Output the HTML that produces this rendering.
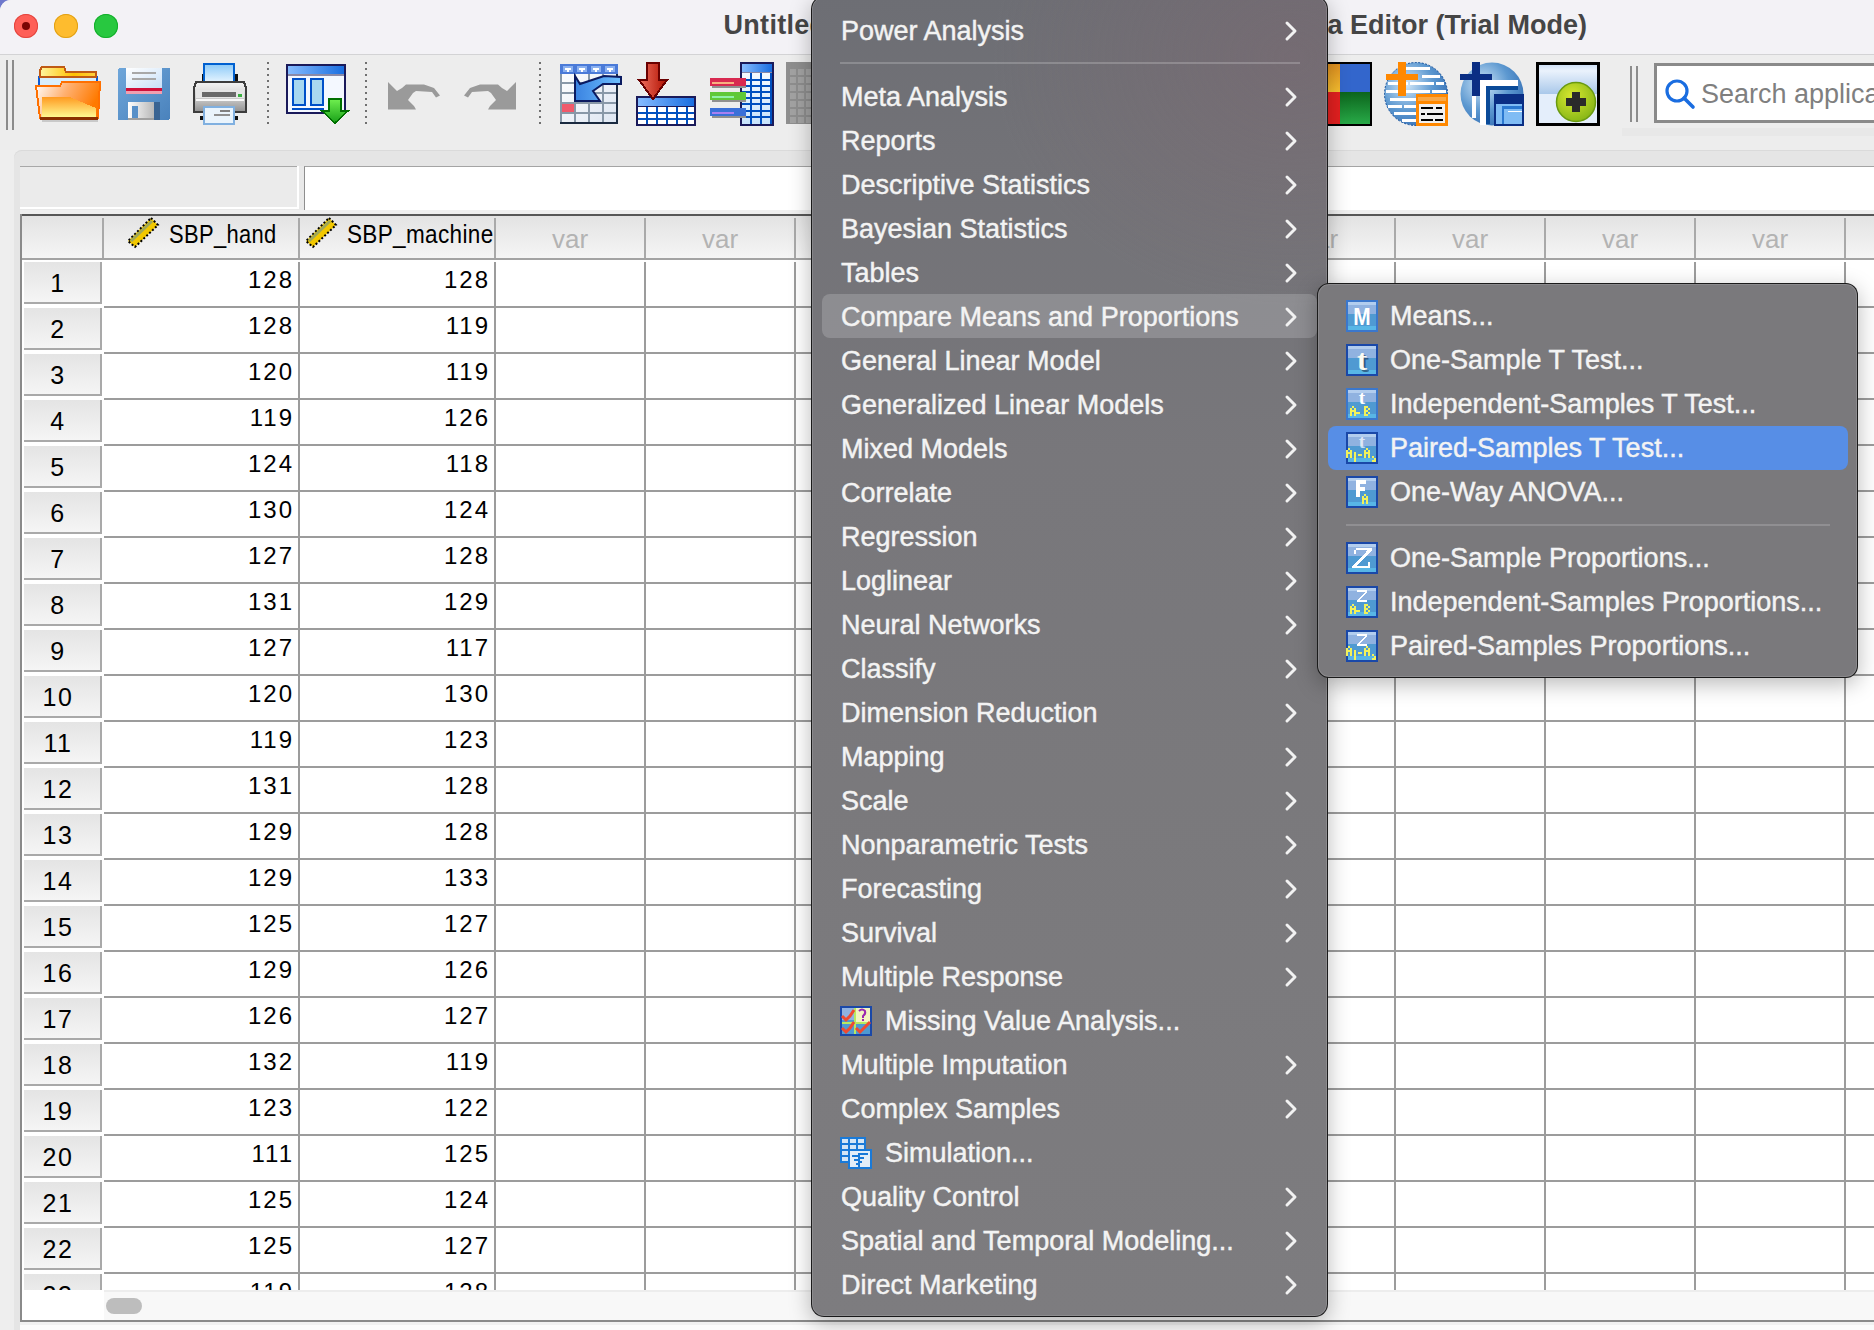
<!DOCTYPE html>
<html><head><meta charset="utf-8"><title>SPSS</title><style>
html,body{margin:0;padding:0;}
body{width:1874px;height:1330px;overflow:hidden;position:relative;background:#6e78cc;font-family:"Liberation Sans",sans-serif;}
.a{position:absolute;}
.t{position:absolute;white-space:nowrap;}
.m{-webkit-text-stroke:0.45px #f3f3f3;}
svg{position:absolute;overflow:visible;}
</style></head><body>
<div class="a" style="left:0px;top:0px;width:1874px;height:1330px;background:#eeeeee;border-top-left-radius:11px;overflow:hidden;"></div>
<div class="a" style="left:0px;top:0px;width:1874px;height:54px;background:#f3f2f6;border-top-left-radius:11px;"></div>
<div class="a" style="left:0px;top:54px;width:1874px;height:1px;background:#d3d3d5;"></div>
<div class="a" style="left:14px;top:14px;width:24px;height:24px;background:#fe5f57;border-radius:50%;box-shadow:inset 0 0 0 1px #e2463f;"></div>
<div class="a" style="left:54px;top:14px;width:24px;height:24px;background:#febc2e;border-radius:50%;box-shadow:inset 0 0 0 1px #e1a116;"></div>
<div class="a" style="left:94px;top:14px;width:24px;height:24px;background:#28c840;border-radius:50%;box-shadow:inset 0 0 0 1px #14ae2c;"></div>
<div class="a" style="left:22px;top:22px;width:8px;height:8px;background:#7a0504;border-radius:50%;"></div>
<div class="t" style="left:723.5px;top:7.64px;font-size:27px;line-height:34px;color:#454545;font-weight:bold;letter-spacing:0.3px;">Untitled1 [DataSet0]</div>
<div class="t" style="left:1287px;width:300px;text-align:right;top:7.64px;font-size:27px;line-height:34px;color:#454545;font-weight:bold;">a Editor (Trial Mode)</div>
<div class="a" style="left:0px;top:55px;width:1874px;height:95px;background:#ededed;"></div>
<div class="a" style="left:1622px;top:128px;width:252px;height:8px;background:#e8e8e8;"></div>
<div class="a" style="left:14px;top:150px;width:1874px;height:1200px;background:#e5e5e5;border-top-left-radius:8px;box-shadow:inset 0 1px 0 #dadada;"></div>
<div class="a" style="left:20px;top:166px;width:1854px;height:48px;background:#e9e9e9;"></div>
<div class="a" style="left:20px;top:166px;width:279px;height:43px;background:#ffffff;"></div>
<div class="a" style="left:20px;top:166px;width:277px;height:41px;background:#ebebeb;border-top:1px solid #a8a8a8;box-sizing:border-box;"></div>
<div class="a" style="left:304px;top:166px;width:1570px;height:44px;background:#ffffff;border-left:1px solid #8e8e8e;border-top:1px solid #a4a4a4;box-sizing:border-box;"></div>
<div class="a" style="left:20px;top:210px;width:1854px;height:4px;background:#efefef;"></div>
<div class="a" style="left:20px;top:214px;width:1854px;height:1108px;background:#ffffff;"></div>
<div class="a" style="left:20px;top:214px;width:1854px;height:2px;background:#575757;"></div>
<div class="a" style="left:20px;top:214px;width:2px;height:1108px;background:#8a8a8a;"></div>
<div class="a" style="left:22px;top:216px;width:1852px;height:42px;background:linear-gradient(#e3e3e3,#f5f5f5);"></div>
<div class="a" style="left:22px;top:258px;width:1852px;height:2px;background:#a3a3a3;"></div>
<div class="a" style="left:102px;top:218px;width:2px;height:40px;background:#a9a9a9;"></div>
<div class="a" style="left:298px;top:218px;width:2px;height:40px;background:#a9a9a9;"></div>
<div class="a" style="left:494px;top:218px;width:2px;height:40px;background:#a9a9a9;"></div>
<div class="a" style="left:644px;top:218px;width:2px;height:40px;background:#a9a9a9;"></div>
<div class="a" style="left:794px;top:218px;width:2px;height:40px;background:#a9a9a9;"></div>
<div class="a" style="left:944px;top:218px;width:2px;height:40px;background:#a9a9a9;"></div>
<div class="a" style="left:1094px;top:218px;width:2px;height:40px;background:#a9a9a9;"></div>
<div class="a" style="left:1244px;top:218px;width:2px;height:40px;background:#a9a9a9;"></div>
<div class="a" style="left:1394px;top:218px;width:2px;height:40px;background:#a9a9a9;"></div>
<div class="a" style="left:1544px;top:218px;width:2px;height:40px;background:#a9a9a9;"></div>
<div class="a" style="left:1694px;top:218px;width:2px;height:40px;background:#a9a9a9;"></div>
<div class="a" style="left:1844px;top:218px;width:2px;height:40px;background:#a9a9a9;"></div>
<div class="a" style="left:0;top:0;width:1874px;height:1290px;overflow:hidden;">
<div class="a" style="left:24px;top:262px;width:76px;height:40px;background:linear-gradient(#e4e4e4,#f5f5f5);border-right:2px solid #a9a9a9;border-bottom:2px solid #a9a9a9;"></div>
<div class="t" style="left:23.0px;width:70px;text-align:center;top:267.84px;font-size:25px;line-height:31px;color:#000;font-weight:normal;letter-spacing:1.5px;">1</div>
<div class="t" style="left:194px;width:100px;text-align:right;top:264.68px;font-size:24px;line-height:30px;color:#000;font-weight:normal;letter-spacing:2px;">128</div>
<div class="t" style="left:390px;width:100px;text-align:right;top:264.68px;font-size:24px;line-height:30px;color:#000;font-weight:normal;letter-spacing:2px;">128</div>
<div class="a" style="left:24px;top:308px;width:76px;height:40px;background:linear-gradient(#e4e4e4,#f5f5f5);border-right:2px solid #a9a9a9;border-bottom:2px solid #a9a9a9;"></div>
<div class="t" style="left:23.0px;width:70px;text-align:center;top:313.84px;font-size:25px;line-height:31px;color:#000;font-weight:normal;letter-spacing:1.5px;">2</div>
<div class="t" style="left:194px;width:100px;text-align:right;top:310.68px;font-size:24px;line-height:30px;color:#000;font-weight:normal;letter-spacing:2px;">128</div>
<div class="t" style="left:390px;width:100px;text-align:right;top:310.68px;font-size:24px;line-height:30px;color:#000;font-weight:normal;letter-spacing:2px;">119</div>
<div class="a" style="left:24px;top:354px;width:76px;height:40px;background:linear-gradient(#e4e4e4,#f5f5f5);border-right:2px solid #a9a9a9;border-bottom:2px solid #a9a9a9;"></div>
<div class="t" style="left:23.0px;width:70px;text-align:center;top:359.84px;font-size:25px;line-height:31px;color:#000;font-weight:normal;letter-spacing:1.5px;">3</div>
<div class="t" style="left:194px;width:100px;text-align:right;top:356.68px;font-size:24px;line-height:30px;color:#000;font-weight:normal;letter-spacing:2px;">120</div>
<div class="t" style="left:390px;width:100px;text-align:right;top:356.68px;font-size:24px;line-height:30px;color:#000;font-weight:normal;letter-spacing:2px;">119</div>
<div class="a" style="left:24px;top:400px;width:76px;height:40px;background:linear-gradient(#e4e4e4,#f5f5f5);border-right:2px solid #a9a9a9;border-bottom:2px solid #a9a9a9;"></div>
<div class="t" style="left:23.0px;width:70px;text-align:center;top:405.84px;font-size:25px;line-height:31px;color:#000;font-weight:normal;letter-spacing:1.5px;">4</div>
<div class="t" style="left:194px;width:100px;text-align:right;top:402.68px;font-size:24px;line-height:30px;color:#000;font-weight:normal;letter-spacing:2px;">119</div>
<div class="t" style="left:390px;width:100px;text-align:right;top:402.68px;font-size:24px;line-height:30px;color:#000;font-weight:normal;letter-spacing:2px;">126</div>
<div class="a" style="left:24px;top:446px;width:76px;height:40px;background:linear-gradient(#e4e4e4,#f5f5f5);border-right:2px solid #a9a9a9;border-bottom:2px solid #a9a9a9;"></div>
<div class="t" style="left:23.0px;width:70px;text-align:center;top:451.84px;font-size:25px;line-height:31px;color:#000;font-weight:normal;letter-spacing:1.5px;">5</div>
<div class="t" style="left:194px;width:100px;text-align:right;top:448.68px;font-size:24px;line-height:30px;color:#000;font-weight:normal;letter-spacing:2px;">124</div>
<div class="t" style="left:390px;width:100px;text-align:right;top:448.68px;font-size:24px;line-height:30px;color:#000;font-weight:normal;letter-spacing:2px;">118</div>
<div class="a" style="left:24px;top:492px;width:76px;height:40px;background:linear-gradient(#e4e4e4,#f5f5f5);border-right:2px solid #a9a9a9;border-bottom:2px solid #a9a9a9;"></div>
<div class="t" style="left:23.0px;width:70px;text-align:center;top:497.84px;font-size:25px;line-height:31px;color:#000;font-weight:normal;letter-spacing:1.5px;">6</div>
<div class="t" style="left:194px;width:100px;text-align:right;top:494.68px;font-size:24px;line-height:30px;color:#000;font-weight:normal;letter-spacing:2px;">130</div>
<div class="t" style="left:390px;width:100px;text-align:right;top:494.68px;font-size:24px;line-height:30px;color:#000;font-weight:normal;letter-spacing:2px;">124</div>
<div class="a" style="left:24px;top:538px;width:76px;height:40px;background:linear-gradient(#e4e4e4,#f5f5f5);border-right:2px solid #a9a9a9;border-bottom:2px solid #a9a9a9;"></div>
<div class="t" style="left:23.0px;width:70px;text-align:center;top:543.84px;font-size:25px;line-height:31px;color:#000;font-weight:normal;letter-spacing:1.5px;">7</div>
<div class="t" style="left:194px;width:100px;text-align:right;top:540.68px;font-size:24px;line-height:30px;color:#000;font-weight:normal;letter-spacing:2px;">127</div>
<div class="t" style="left:390px;width:100px;text-align:right;top:540.68px;font-size:24px;line-height:30px;color:#000;font-weight:normal;letter-spacing:2px;">128</div>
<div class="a" style="left:24px;top:584px;width:76px;height:40px;background:linear-gradient(#e4e4e4,#f5f5f5);border-right:2px solid #a9a9a9;border-bottom:2px solid #a9a9a9;"></div>
<div class="t" style="left:23.0px;width:70px;text-align:center;top:589.84px;font-size:25px;line-height:31px;color:#000;font-weight:normal;letter-spacing:1.5px;">8</div>
<div class="t" style="left:194px;width:100px;text-align:right;top:586.68px;font-size:24px;line-height:30px;color:#000;font-weight:normal;letter-spacing:2px;">131</div>
<div class="t" style="left:390px;width:100px;text-align:right;top:586.68px;font-size:24px;line-height:30px;color:#000;font-weight:normal;letter-spacing:2px;">129</div>
<div class="a" style="left:24px;top:630px;width:76px;height:40px;background:linear-gradient(#e4e4e4,#f5f5f5);border-right:2px solid #a9a9a9;border-bottom:2px solid #a9a9a9;"></div>
<div class="t" style="left:23.0px;width:70px;text-align:center;top:635.84px;font-size:25px;line-height:31px;color:#000;font-weight:normal;letter-spacing:1.5px;">9</div>
<div class="t" style="left:194px;width:100px;text-align:right;top:632.68px;font-size:24px;line-height:30px;color:#000;font-weight:normal;letter-spacing:2px;">127</div>
<div class="t" style="left:390px;width:100px;text-align:right;top:632.68px;font-size:24px;line-height:30px;color:#000;font-weight:normal;letter-spacing:2px;">117</div>
<div class="a" style="left:24px;top:676px;width:76px;height:40px;background:linear-gradient(#e4e4e4,#f5f5f5);border-right:2px solid #a9a9a9;border-bottom:2px solid #a9a9a9;"></div>
<div class="t" style="left:23.0px;width:70px;text-align:center;top:681.84px;font-size:25px;line-height:31px;color:#000;font-weight:normal;letter-spacing:1.5px;">10</div>
<div class="t" style="left:194px;width:100px;text-align:right;top:678.68px;font-size:24px;line-height:30px;color:#000;font-weight:normal;letter-spacing:2px;">120</div>
<div class="t" style="left:390px;width:100px;text-align:right;top:678.68px;font-size:24px;line-height:30px;color:#000;font-weight:normal;letter-spacing:2px;">130</div>
<div class="a" style="left:24px;top:722px;width:76px;height:40px;background:linear-gradient(#e4e4e4,#f5f5f5);border-right:2px solid #a9a9a9;border-bottom:2px solid #a9a9a9;"></div>
<div class="t" style="left:23.0px;width:70px;text-align:center;top:727.84px;font-size:25px;line-height:31px;color:#000;font-weight:normal;letter-spacing:1.5px;">11</div>
<div class="t" style="left:194px;width:100px;text-align:right;top:724.68px;font-size:24px;line-height:30px;color:#000;font-weight:normal;letter-spacing:2px;">119</div>
<div class="t" style="left:390px;width:100px;text-align:right;top:724.68px;font-size:24px;line-height:30px;color:#000;font-weight:normal;letter-spacing:2px;">123</div>
<div class="a" style="left:24px;top:768px;width:76px;height:40px;background:linear-gradient(#e4e4e4,#f5f5f5);border-right:2px solid #a9a9a9;border-bottom:2px solid #a9a9a9;"></div>
<div class="t" style="left:23.0px;width:70px;text-align:center;top:773.84px;font-size:25px;line-height:31px;color:#000;font-weight:normal;letter-spacing:1.5px;">12</div>
<div class="t" style="left:194px;width:100px;text-align:right;top:770.68px;font-size:24px;line-height:30px;color:#000;font-weight:normal;letter-spacing:2px;">131</div>
<div class="t" style="left:390px;width:100px;text-align:right;top:770.68px;font-size:24px;line-height:30px;color:#000;font-weight:normal;letter-spacing:2px;">128</div>
<div class="a" style="left:24px;top:814px;width:76px;height:40px;background:linear-gradient(#e4e4e4,#f5f5f5);border-right:2px solid #a9a9a9;border-bottom:2px solid #a9a9a9;"></div>
<div class="t" style="left:23.0px;width:70px;text-align:center;top:819.84px;font-size:25px;line-height:31px;color:#000;font-weight:normal;letter-spacing:1.5px;">13</div>
<div class="t" style="left:194px;width:100px;text-align:right;top:816.68px;font-size:24px;line-height:30px;color:#000;font-weight:normal;letter-spacing:2px;">129</div>
<div class="t" style="left:390px;width:100px;text-align:right;top:816.68px;font-size:24px;line-height:30px;color:#000;font-weight:normal;letter-spacing:2px;">128</div>
<div class="a" style="left:24px;top:860px;width:76px;height:40px;background:linear-gradient(#e4e4e4,#f5f5f5);border-right:2px solid #a9a9a9;border-bottom:2px solid #a9a9a9;"></div>
<div class="t" style="left:23.0px;width:70px;text-align:center;top:865.84px;font-size:25px;line-height:31px;color:#000;font-weight:normal;letter-spacing:1.5px;">14</div>
<div class="t" style="left:194px;width:100px;text-align:right;top:862.68px;font-size:24px;line-height:30px;color:#000;font-weight:normal;letter-spacing:2px;">129</div>
<div class="t" style="left:390px;width:100px;text-align:right;top:862.68px;font-size:24px;line-height:30px;color:#000;font-weight:normal;letter-spacing:2px;">133</div>
<div class="a" style="left:24px;top:906px;width:76px;height:40px;background:linear-gradient(#e4e4e4,#f5f5f5);border-right:2px solid #a9a9a9;border-bottom:2px solid #a9a9a9;"></div>
<div class="t" style="left:23.0px;width:70px;text-align:center;top:911.84px;font-size:25px;line-height:31px;color:#000;font-weight:normal;letter-spacing:1.5px;">15</div>
<div class="t" style="left:194px;width:100px;text-align:right;top:908.68px;font-size:24px;line-height:30px;color:#000;font-weight:normal;letter-spacing:2px;">125</div>
<div class="t" style="left:390px;width:100px;text-align:right;top:908.68px;font-size:24px;line-height:30px;color:#000;font-weight:normal;letter-spacing:2px;">127</div>
<div class="a" style="left:24px;top:952px;width:76px;height:40px;background:linear-gradient(#e4e4e4,#f5f5f5);border-right:2px solid #a9a9a9;border-bottom:2px solid #a9a9a9;"></div>
<div class="t" style="left:23.0px;width:70px;text-align:center;top:957.84px;font-size:25px;line-height:31px;color:#000;font-weight:normal;letter-spacing:1.5px;">16</div>
<div class="t" style="left:194px;width:100px;text-align:right;top:954.68px;font-size:24px;line-height:30px;color:#000;font-weight:normal;letter-spacing:2px;">129</div>
<div class="t" style="left:390px;width:100px;text-align:right;top:954.68px;font-size:24px;line-height:30px;color:#000;font-weight:normal;letter-spacing:2px;">126</div>
<div class="a" style="left:24px;top:998px;width:76px;height:40px;background:linear-gradient(#e4e4e4,#f5f5f5);border-right:2px solid #a9a9a9;border-bottom:2px solid #a9a9a9;"></div>
<div class="t" style="left:23.0px;width:70px;text-align:center;top:1003.84px;font-size:25px;line-height:31px;color:#000;font-weight:normal;letter-spacing:1.5px;">17</div>
<div class="t" style="left:194px;width:100px;text-align:right;top:1000.68px;font-size:24px;line-height:30px;color:#000;font-weight:normal;letter-spacing:2px;">126</div>
<div class="t" style="left:390px;width:100px;text-align:right;top:1000.68px;font-size:24px;line-height:30px;color:#000;font-weight:normal;letter-spacing:2px;">127</div>
<div class="a" style="left:24px;top:1044px;width:76px;height:40px;background:linear-gradient(#e4e4e4,#f5f5f5);border-right:2px solid #a9a9a9;border-bottom:2px solid #a9a9a9;"></div>
<div class="t" style="left:23.0px;width:70px;text-align:center;top:1049.84px;font-size:25px;line-height:31px;color:#000;font-weight:normal;letter-spacing:1.5px;">18</div>
<div class="t" style="left:194px;width:100px;text-align:right;top:1046.68px;font-size:24px;line-height:30px;color:#000;font-weight:normal;letter-spacing:2px;">132</div>
<div class="t" style="left:390px;width:100px;text-align:right;top:1046.68px;font-size:24px;line-height:30px;color:#000;font-weight:normal;letter-spacing:2px;">119</div>
<div class="a" style="left:24px;top:1090px;width:76px;height:40px;background:linear-gradient(#e4e4e4,#f5f5f5);border-right:2px solid #a9a9a9;border-bottom:2px solid #a9a9a9;"></div>
<div class="t" style="left:23.0px;width:70px;text-align:center;top:1095.84px;font-size:25px;line-height:31px;color:#000;font-weight:normal;letter-spacing:1.5px;">19</div>
<div class="t" style="left:194px;width:100px;text-align:right;top:1092.68px;font-size:24px;line-height:30px;color:#000;font-weight:normal;letter-spacing:2px;">123</div>
<div class="t" style="left:390px;width:100px;text-align:right;top:1092.68px;font-size:24px;line-height:30px;color:#000;font-weight:normal;letter-spacing:2px;">122</div>
<div class="a" style="left:24px;top:1136px;width:76px;height:40px;background:linear-gradient(#e4e4e4,#f5f5f5);border-right:2px solid #a9a9a9;border-bottom:2px solid #a9a9a9;"></div>
<div class="t" style="left:23.0px;width:70px;text-align:center;top:1141.84px;font-size:25px;line-height:31px;color:#000;font-weight:normal;letter-spacing:1.5px;">20</div>
<div class="t" style="left:194px;width:100px;text-align:right;top:1138.68px;font-size:24px;line-height:30px;color:#000;font-weight:normal;letter-spacing:2px;">111</div>
<div class="t" style="left:390px;width:100px;text-align:right;top:1138.68px;font-size:24px;line-height:30px;color:#000;font-weight:normal;letter-spacing:2px;">125</div>
<div class="a" style="left:24px;top:1182px;width:76px;height:40px;background:linear-gradient(#e4e4e4,#f5f5f5);border-right:2px solid #a9a9a9;border-bottom:2px solid #a9a9a9;"></div>
<div class="t" style="left:23.0px;width:70px;text-align:center;top:1187.84px;font-size:25px;line-height:31px;color:#000;font-weight:normal;letter-spacing:1.5px;">21</div>
<div class="t" style="left:194px;width:100px;text-align:right;top:1184.68px;font-size:24px;line-height:30px;color:#000;font-weight:normal;letter-spacing:2px;">125</div>
<div class="t" style="left:390px;width:100px;text-align:right;top:1184.68px;font-size:24px;line-height:30px;color:#000;font-weight:normal;letter-spacing:2px;">124</div>
<div class="a" style="left:24px;top:1228px;width:76px;height:40px;background:linear-gradient(#e4e4e4,#f5f5f5);border-right:2px solid #a9a9a9;border-bottom:2px solid #a9a9a9;"></div>
<div class="t" style="left:23.0px;width:70px;text-align:center;top:1233.84px;font-size:25px;line-height:31px;color:#000;font-weight:normal;letter-spacing:1.5px;">22</div>
<div class="t" style="left:194px;width:100px;text-align:right;top:1230.68px;font-size:24px;line-height:30px;color:#000;font-weight:normal;letter-spacing:2px;">125</div>
<div class="t" style="left:390px;width:100px;text-align:right;top:1230.68px;font-size:24px;line-height:30px;color:#000;font-weight:normal;letter-spacing:2px;">127</div>
<div class="a" style="left:24px;top:1274px;width:76px;height:40px;background:linear-gradient(#e4e4e4,#f5f5f5);border-right:2px solid #a9a9a9;border-bottom:2px solid #a9a9a9;"></div>
<div class="t" style="left:23.0px;width:70px;text-align:center;top:1279.84px;font-size:25px;line-height:31px;color:#000;font-weight:normal;letter-spacing:1.5px;">23</div>
<div class="t" style="left:194px;width:100px;text-align:right;top:1276.68px;font-size:24px;line-height:30px;color:#000;font-weight:normal;letter-spacing:2px;">119</div>
<div class="t" style="left:390px;width:100px;text-align:right;top:1276.68px;font-size:24px;line-height:30px;color:#000;font-weight:normal;letter-spacing:2px;">128</div>
<div class="a" style="left:104px;top:306px;width:1770px;height:2px;background:#9c9c9c;"></div>
<div class="a" style="left:104px;top:352px;width:1770px;height:2px;background:#9c9c9c;"></div>
<div class="a" style="left:104px;top:398px;width:1770px;height:2px;background:#9c9c9c;"></div>
<div class="a" style="left:104px;top:444px;width:1770px;height:2px;background:#9c9c9c;"></div>
<div class="a" style="left:104px;top:490px;width:1770px;height:2px;background:#9c9c9c;"></div>
<div class="a" style="left:104px;top:536px;width:1770px;height:2px;background:#9c9c9c;"></div>
<div class="a" style="left:104px;top:582px;width:1770px;height:2px;background:#9c9c9c;"></div>
<div class="a" style="left:104px;top:628px;width:1770px;height:2px;background:#9c9c9c;"></div>
<div class="a" style="left:104px;top:674px;width:1770px;height:2px;background:#9c9c9c;"></div>
<div class="a" style="left:104px;top:720px;width:1770px;height:2px;background:#9c9c9c;"></div>
<div class="a" style="left:104px;top:766px;width:1770px;height:2px;background:#9c9c9c;"></div>
<div class="a" style="left:104px;top:812px;width:1770px;height:2px;background:#9c9c9c;"></div>
<div class="a" style="left:104px;top:858px;width:1770px;height:2px;background:#9c9c9c;"></div>
<div class="a" style="left:104px;top:904px;width:1770px;height:2px;background:#9c9c9c;"></div>
<div class="a" style="left:104px;top:950px;width:1770px;height:2px;background:#9c9c9c;"></div>
<div class="a" style="left:104px;top:996px;width:1770px;height:2px;background:#9c9c9c;"></div>
<div class="a" style="left:104px;top:1042px;width:1770px;height:2px;background:#9c9c9c;"></div>
<div class="a" style="left:104px;top:1088px;width:1770px;height:2px;background:#9c9c9c;"></div>
<div class="a" style="left:104px;top:1134px;width:1770px;height:2px;background:#9c9c9c;"></div>
<div class="a" style="left:104px;top:1180px;width:1770px;height:2px;background:#9c9c9c;"></div>
<div class="a" style="left:104px;top:1226px;width:1770px;height:2px;background:#9c9c9c;"></div>
<div class="a" style="left:104px;top:1272px;width:1770px;height:2px;background:#9c9c9c;"></div>
<div class="a" style="left:298px;top:262px;width:2px;height:1028px;background:#9c9c9c;"></div>
<div class="a" style="left:494px;top:262px;width:2px;height:1028px;background:#9c9c9c;"></div>
<div class="a" style="left:644px;top:262px;width:2px;height:1028px;background:#9c9c9c;"></div>
<div class="a" style="left:794px;top:262px;width:2px;height:1028px;background:#9c9c9c;"></div>
<div class="a" style="left:944px;top:262px;width:2px;height:1028px;background:#9c9c9c;"></div>
<div class="a" style="left:1094px;top:262px;width:2px;height:1028px;background:#9c9c9c;"></div>
<div class="a" style="left:1244px;top:262px;width:2px;height:1028px;background:#9c9c9c;"></div>
<div class="a" style="left:1394px;top:262px;width:2px;height:1028px;background:#9c9c9c;"></div>
<div class="a" style="left:1544px;top:262px;width:2px;height:1028px;background:#9c9c9c;"></div>
<div class="a" style="left:1694px;top:262px;width:2px;height:1028px;background:#9c9c9c;"></div>
<div class="a" style="left:1844px;top:262px;width:2px;height:1028px;background:#9c9c9c;"></div>
</div>
<svg style="left:124px;top:214px" width="40" height="38" viewBox="0 0 40 38"><polygon points="27,4 34,11 11,33 4,27" fill="#f2c800" stroke="#000" stroke-width="2" stroke-dasharray="2 2"/><path d="M7 27 L28 7" stroke="#a0a858" stroke-width="3"/></svg>
<svg style="left:302px;top:214px" width="40" height="38" viewBox="0 0 40 38"><polygon points="27,4 34,11 11,33 4,27" fill="#f2c800" stroke="#000" stroke-width="2" stroke-dasharray="2 2"/><path d="M7 27 L28 7" stroke="#a0a858" stroke-width="3"/></svg>
<div class="t" style="left:168.5px;top:219.44px;font-size:25px;line-height:31px;color:#000;font-weight:normal;letter-spacing:0.4px;transform:scaleX(0.877);transform-origin:0 0;">SBP_hand</div>
<div class="t" style="left:346.5px;top:219.44px;font-size:25px;line-height:31px;color:#000;font-weight:normal;letter-spacing:0.4px;transform:scaleX(0.9);transform-origin:0 0;">SBP_machine</div>
<div class="t" style="left:500.0px;width:140px;text-align:center;top:222.79px;font-size:26px;line-height:32px;color:#b3b3b3;font-weight:normal;">var</div>
<div class="t" style="left:650.0px;width:140px;text-align:center;top:222.79px;font-size:26px;line-height:32px;color:#b3b3b3;font-weight:normal;">var</div>
<div class="t" style="left:800.0px;width:140px;text-align:center;top:222.79px;font-size:26px;line-height:32px;color:#b3b3b3;font-weight:normal;">var</div>
<div class="t" style="left:950.0px;width:140px;text-align:center;top:222.79px;font-size:26px;line-height:32px;color:#b3b3b3;font-weight:normal;">var</div>
<div class="t" style="left:1100.0px;width:140px;text-align:center;top:222.79px;font-size:26px;line-height:32px;color:#b3b3b3;font-weight:normal;">var</div>
<div class="t" style="left:1250.0px;width:140px;text-align:center;top:222.79px;font-size:26px;line-height:32px;color:#b3b3b3;font-weight:normal;">var</div>
<div class="t" style="left:1400.0px;width:140px;text-align:center;top:222.79px;font-size:26px;line-height:32px;color:#b3b3b3;font-weight:normal;">var</div>
<div class="t" style="left:1550.0px;width:140px;text-align:center;top:222.79px;font-size:26px;line-height:32px;color:#b3b3b3;font-weight:normal;">var</div>
<div class="t" style="left:1700.0px;width:140px;text-align:center;top:222.79px;font-size:26px;line-height:32px;color:#b3b3b3;font-weight:normal;">var</div>
<div class="a" style="left:22px;top:1290px;width:82px;height:30px;background:#ffffff;"></div>
<div class="a" style="left:104px;top:1290px;width:1770px;height:30px;background:#f8f8f8;border-top:2px solid #ededed;box-sizing:border-box;"></div>
<div class="a" style="left:106px;top:1298px;width:36px;height:16px;background:#bdbdbd;border-radius:8px;"></div>
<div class="a" style="left:20px;top:1320px;width:1854px;height:2px;background:#8a8a8a;"></div>
<div class="a" style="left:20px;top:1322px;width:1854px;height:3px;background:#f1f1f1;"></div>
<div class="a" style="left:20px;top:1325px;width:1854px;height:5px;background:#fbfbfb;"></div>
<svg style="left:0;top:0" width="1874" height="140" viewBox="0 0 1874 140" shape-rendering="crispEdges"><defs>
<linearGradient id="gBlueTitle" x1="0" y1="0" x2="1" y2="0"><stop offset="0" stop-color="#86bcff"/><stop offset="1" stop-color="#1a6ee0"/></linearGradient>
<linearGradient id="gFolderFront" x1="0" y1="0" x2="1" y2="0.3"><stop offset="0" stop-color="#ffffff"/><stop offset="0.5" stop-color="#ffb070"/><stop offset="1" stop-color="#ff7a00"/></linearGradient>
<linearGradient id="gFolderIn" x1="0" y1="0" x2="0" y2="1"><stop offset="0" stop-color="#ff9a20"/><stop offset="1" stop-color="#fff890"/></linearGradient>
<linearGradient id="gTab" x1="0" y1="0" x2="1" y2="0"><stop offset="0" stop-color="#fff6a0"/><stop offset="0.6" stop-color="#ffc000"/><stop offset="1" stop-color="#ffd040"/></linearGradient>
<linearGradient id="gFloppy" x1="0" y1="0" x2="1" y2="1"><stop offset="0" stop-color="#6ea6da"/><stop offset="1" stop-color="#4a82bc"/></linearGradient>
<linearGradient id="gLabel" x1="0" y1="0" x2="1" y2="1"><stop offset="0" stop-color="#ffffff"/><stop offset="1" stop-color="#c8e0f8"/></linearGradient>
<linearGradient id="gShutter" x1="0" y1="0" x2="1" y2="0"><stop offset="0" stop-color="#ffffff"/><stop offset="1" stop-color="#b8b8b8"/></linearGradient>
<linearGradient id="gPrinter" x1="0" y1="0" x2="0" y2="1"><stop offset="0" stop-color="#f4f4f4"/><stop offset="0.5" stop-color="#d0d0d0"/><stop offset="1" stop-color="#909090"/></linearGradient>
<linearGradient id="gPaper" x1="0" y1="0" x2="0" y2="1"><stop offset="0" stop-color="#8ccaf8"/><stop offset="1" stop-color="#eef8ff"/></linearGradient>
<linearGradient id="gCell" x1="0" y1="0" x2="1" y2="1"><stop offset="0" stop-color="#ffffff"/><stop offset="1" stop-color="#dde6f2"/></linearGradient>
<linearGradient id="gArrowB" x1="0" y1="0" x2="1" y2="0"><stop offset="0" stop-color="#3a82e0"/><stop offset="1" stop-color="#6ec0ff"/></linearGradient>
<linearGradient id="gRed" x1="0" y1="0" x2="1" y2="0"><stop offset="0" stop-color="#f07060"/><stop offset="1" stop-color="#b01000"/></linearGradient>
<linearGradient id="gGreen" x1="0" y1="0" x2="0" y2="1"><stop offset="0" stop-color="#70f050"/><stop offset="1" stop-color="#18a018"/></linearGradient>
<linearGradient id="gCellB" x1="0" y1="0" x2="0" y2="1"><stop offset="0" stop-color="#ffffff"/><stop offset="1" stop-color="#c8e4fc"/></linearGradient>
<radialGradient id="gGlobe" cx="0.35" cy="0.35" r="0.7"><stop offset="0" stop-color="#d0e6f8"/><stop offset="0.6" stop-color="#5c98d0"/><stop offset="1" stop-color="#3a74b8"/></radialGradient>
<linearGradient id="gGreenSq" x1="0" y1="0" x2="0" y2="1"><stop offset="0" stop-color="#0c641c"/><stop offset="1" stop-color="#28aa48"/></linearGradient>
<linearGradient id="gOrangeSq" x1="0" y1="0" x2="0" y2="1"><stop offset="0" stop-color="#e09020"/><stop offset="1" stop-color="#f8c030"/></linearGradient>
<linearGradient id="gTopBlue" x1="0" y1="0" x2="0" y2="1"><stop offset="0" stop-color="#cfe0f6"/><stop offset="0.2" stop-color="#eaf2fc"/><stop offset="1" stop-color="#a9c8ea"/></linearGradient>
<radialGradient id="gLime" cx="0.4" cy="0.35" r="0.65"><stop offset="0" stop-color="#d8e830"/><stop offset="1" stop-color="#8ab818"/></radialGradient>
</defs><rect x="6" y="60" width="2" height="70" fill="#8c8c8c"/><rect x="12" y="60" width="2" height="70" fill="#8c8c8c"/><g transform="translate(30,60)"><rect x="8" y="16" width="60" height="12" fill="#0a5ad8"/><rect x="10" y="16" width="56" height="12" fill="#d8eefc"/><path d="M10 17 V10 L12 7 H34 L36 12 H66 V17 Z" fill="url(#gTab)" stroke="#c05a14" stroke-width="2"/><path d="M6 26 H30 L32 22 H70 L68 58 H10 Z" fill="url(#gFolderFront)" stroke="#ff7000" stroke-width="2"/><path d="M12 37 H40 L56 44 L66 48 V57 H12 Z" fill="url(#gFolderIn)"/><rect x="10" y="57" width="58" height="3" fill="#8a3000"/><rect x="12" y="60" width="56" height="2" fill="#b0b0b0" opacity="0.6"/></g><g transform="translate(110,60)"><rect x="8" y="8" width="52" height="52" rx="2" fill="url(#gFloppy)"/><rect x="16" y="8" width="36" height="20" fill="url(#gLabel)"/><rect x="22" y="12" width="24" height="2" fill="#a8a8a8"/><rect x="22" y="18" width="24" height="2" fill="#a8a8a8"/><rect x="16" y="28" width="36" height="3" fill="#d0103a"/><rect x="16" y="31" width="36" height="3" fill="#f0a0b0"/><rect x="18" y="42" width="26" height="17" fill="url(#gShutter)"/><rect x="22" y="46" width="6" height="13" fill="#5890c8"/><rect x="44" y="42" width="6" height="18" fill="#3a6492"/><rect x="18" y="58" width="26" height="2" fill="#a0a0a0"/></g><g transform="translate(110,60)"><rect x="92" y="14" width="4" height="8" fill="#111"/><rect x="124" y="14" width="4" height="8" fill="#111"/><rect x="94" y="4" width="30" height="20" fill="url(#gPaper)" stroke="#0060d0" stroke-width="2"/><path d="M84 28 L86 22 H134 L136 28 V52 H84 Z" fill="url(#gPrinter)" stroke="#3c3c3c" stroke-width="2"/><rect x="86" y="30" width="48" height="8" fill="#e6e6e6"/><rect x="92" y="32" width="34" height="5" fill="#6a6a6a"/><rect x="128" y="34" width="4" height="3" fill="#3ab040"/><rect x="86" y="39" width="48" height="2" fill="#f8f8f8"/><rect x="90" y="56" width="4" height="4" fill="#111"/><rect x="124" y="56" width="4" height="4" fill="#111"/><rect x="94" y="47" width="30" height="17" fill="#eaf4fc" stroke="#80b0e0" stroke-width="1.5"/><rect x="110" y="50" width="10" height="2" fill="#808080"/><rect x="104" y="54" width="16" height="2" fill="#909090"/></g><rect x="267" y="62" width="2" height="2" fill="#707070"/><rect x="267" y="68" width="2" height="2" fill="#707070"/><rect x="267" y="74" width="2" height="2" fill="#707070"/><rect x="267" y="80" width="2" height="2" fill="#707070"/><rect x="267" y="86" width="2" height="2" fill="#707070"/><rect x="267" y="92" width="2" height="2" fill="#707070"/><rect x="267" y="98" width="2" height="2" fill="#707070"/><rect x="267" y="104" width="2" height="2" fill="#707070"/><rect x="267" y="110" width="2" height="2" fill="#707070"/><rect x="267" y="116" width="2" height="2" fill="#707070"/><rect x="267" y="122" width="2" height="2" fill="#707070"/><rect x="365" y="62" width="2" height="2" fill="#707070"/><rect x="365" y="68" width="2" height="2" fill="#707070"/><rect x="365" y="74" width="2" height="2" fill="#707070"/><rect x="365" y="80" width="2" height="2" fill="#707070"/><rect x="365" y="86" width="2" height="2" fill="#707070"/><rect x="365" y="92" width="2" height="2" fill="#707070"/><rect x="365" y="98" width="2" height="2" fill="#707070"/><rect x="365" y="104" width="2" height="2" fill="#707070"/><rect x="365" y="110" width="2" height="2" fill="#707070"/><rect x="365" y="116" width="2" height="2" fill="#707070"/><rect x="365" y="122" width="2" height="2" fill="#707070"/><rect x="539" y="62" width="2" height="2" fill="#707070"/><rect x="539" y="68" width="2" height="2" fill="#707070"/><rect x="539" y="74" width="2" height="2" fill="#707070"/><rect x="539" y="80" width="2" height="2" fill="#707070"/><rect x="539" y="86" width="2" height="2" fill="#707070"/><rect x="539" y="92" width="2" height="2" fill="#707070"/><rect x="539" y="98" width="2" height="2" fill="#707070"/><rect x="539" y="104" width="2" height="2" fill="#707070"/><rect x="539" y="110" width="2" height="2" fill="#707070"/><rect x="539" y="116" width="2" height="2" fill="#707070"/><rect x="539" y="122" width="2" height="2" fill="#707070"/><g transform="translate(280,60)"><rect x="7" y="5" width="58" height="48" fill="#f4f8ff" stroke="#1a1a5a" stroke-width="2"/><rect x="8" y="6" width="56" height="8" fill="url(#gBlueTitle)"/><rect x="8" y="14" width="56" height="2" fill="#8a8aa8"/><rect x="13" y="19" width="12" height="26" fill="#a8d8f0" stroke="#0050c8" stroke-width="2"/><rect x="31" y="19" width="12" height="26" fill="#a8d8f0" stroke="#0050c8" stroke-width="2"/><rect x="12" y="48" width="32" height="2" fill="#0050c8"/><path d="M49 39 H61 V51 H68 L55 63 L42 51 H49 Z" fill="url(#gGreen)" stroke="#007000" stroke-width="1.5"/></g><polygon points="388,82 397,91 402,88 406,84.5 424,84.5 434,88 440,95.5 436,97.5 432,92 416,91 413,93 408,100 414,106 416,109.5 388,109.5" fill="#9a9a9a" shape-rendering="auto"/><polygon points="516,82 507,91 502,88 498,84.5 480,84.5 470,88 464,95.5 468,97.5 472,92 488,91 491,93 496,100 490,106 488,109.5 516,109.5" fill="#9a9a9a" shape-rendering="auto"/><g transform="translate(550,60)"><rect x="10" y="4" width="58" height="60" fill="url(#gCell)"/><rect x="10" y="4" width="58" height="10" fill="#4a7ad8"/><rect x="13" y="6" width="10" height="6" fill="#8ab0f0"/><rect x="15" y="8" width="6" height="2" fill="#fff"/><rect x="17" y="10" width="2" height="2" fill="#fff"/><rect x="27" y="6" width="10" height="6" fill="#8ab0f0"/><rect x="29" y="8" width="6" height="2" fill="#fff"/><rect x="31" y="10" width="2" height="2" fill="#fff"/><rect x="41" y="6" width="10" height="6" fill="#8ab0f0"/><rect x="43" y="8" width="6" height="2" fill="#fff"/><rect x="45" y="10" width="2" height="2" fill="#fff"/><rect x="55" y="6" width="10" height="6" fill="#8ab0f0"/><rect x="57" y="8" width="6" height="2" fill="#fff"/><rect x="59" y="10" width="2" height="2" fill="#fff"/><rect x="24" y="14" width="2" height="48" fill="#8898a8"/><rect x="38" y="14" width="2" height="48" fill="#8898a8"/><rect x="52" y="14" width="2" height="48" fill="#8898a8"/><rect x="10" y="22" width="58" height="2" fill="#8898a8"/><rect x="10" y="32" width="58" height="2" fill="#8898a8"/><rect x="10" y="42" width="58" height="2" fill="#8898a8"/><rect x="10" y="52" width="58" height="2" fill="#8898a8"/><rect x="10" y="14" width="2" height="50" fill="#8898a8"/><rect x="66" y="14" width="2" height="50" fill="#1a2a40"/><rect x="10" y="62" width="58" height="2" fill="#1a2a40"/><rect x="12" y="44" width="12" height="8" fill="#f05a6c"/><path d="M25 16 V41 H50 L43 31 L53 24 H71 V17 L54 16 L42 20 L30 24 Z" fill="url(#gArrowB)" stroke="#0a1a60" stroke-width="2" shape-rendering="auto"/></g><g transform="translate(630,55)"><rect x="7" y="42" width="58" height="28" fill="#ffffff" stroke="#1a1a5a" stroke-width="2"/><rect x="8" y="43" width="56" height="8" fill="url(#gBlueTitle)"/><rect x="8" y="51" width="56" height="1" fill="#1a1a5a"/><rect x="16" y="52" width="2" height="17" fill="#0050c0"/><rect x="26" y="52" width="2" height="17" fill="#0050c0"/><rect x="36" y="52" width="2" height="17" fill="#0050c0"/><rect x="46" y="52" width="2" height="17" fill="#0050c0"/><rect x="56" y="52" width="2" height="17" fill="#0050c0"/><rect x="8" y="57" width="56" height="2" fill="#0050c0"/><rect x="8" y="63" width="56" height="2" fill="#0050c0"/><path d="M17 8 H29 V25 H37 L23 44 L9 25 H17 Z" fill="url(#gRed)" stroke="#6a0000" stroke-width="2"/></g><g transform="translate(630,55)"><rect x="111" y="8" width="32" height="62" fill="url(#gCellB)" stroke="#1a1a5a" stroke-width="2"/><rect x="112" y="9" width="30" height="8" fill="url(#gBlueTitle)"/><rect x="112" y="17" width="30" height="1" fill="#8a8aa8"/><rect x="120" y="18" width="2" height="51" fill="#0050c0"/><rect x="130" y="18" width="2" height="51" fill="#0050c0"/><rect x="140" y="18" width="2" height="51" fill="#0050c0"/><rect x="112" y="24" width="30" height="2" fill="#0050c0"/><rect x="112" y="30" width="30" height="2" fill="#0050c0"/><rect x="112" y="36" width="30" height="2" fill="#0050c0"/><rect x="112" y="42" width="30" height="2" fill="#0050c0"/><rect x="112" y="48" width="30" height="2" fill="#0050c0"/><rect x="112" y="55" width="30" height="2" fill="#0050c0"/><rect x="112" y="61" width="30" height="2" fill="#0050c0"/><rect x="80" y="23" width="36" height="8" fill="#d82a50"/><rect x="82" y="27" width="22" height="2" fill="#f8b080"/><rect x="82" y="31" width="34" height="2" fill="#909090"/><rect x="80" y="37" width="36" height="8" fill="#60c838"/><rect x="82" y="41" width="22" height="2" fill="#90f0a8"/><rect x="82" y="45" width="34" height="2" fill="#909090"/><rect x="80" y="53" width="36" height="8" fill="#3a70d8"/><rect x="82" y="57" width="22" height="2" fill="#a880f0"/><rect x="82" y="61" width="34" height="2" fill="#909090"/></g><rect x="786" y="62" width="40" height="62" fill="#8e8e8e"/><rect x="790" y="69" width="6" height="6" fill="#a2a2a2"/><rect x="790" y="77" width="6" height="6" fill="#a2a2a2"/><rect x="790" y="85" width="6" height="6" fill="#a2a2a2"/><rect x="790" y="93" width="6" height="6" fill="#a2a2a2"/><rect x="790" y="101" width="6" height="6" fill="#a2a2a2"/><rect x="790" y="109" width="6" height="6" fill="#a2a2a2"/><rect x="790" y="117" width="6" height="6" fill="#a2a2a2"/><rect x="798" y="69" width="6" height="6" fill="#a2a2a2"/><rect x="798" y="77" width="6" height="6" fill="#a2a2a2"/><rect x="798" y="85" width="6" height="6" fill="#a2a2a2"/><rect x="798" y="93" width="6" height="6" fill="#a2a2a2"/><rect x="798" y="101" width="6" height="6" fill="#a2a2a2"/><rect x="798" y="109" width="6" height="6" fill="#a2a2a2"/><rect x="798" y="117" width="6" height="6" fill="#a2a2a2"/><rect x="806" y="69" width="6" height="6" fill="#a2a2a2"/><rect x="806" y="77" width="6" height="6" fill="#a2a2a2"/><rect x="806" y="85" width="6" height="6" fill="#a2a2a2"/><rect x="806" y="93" width="6" height="6" fill="#a2a2a2"/><rect x="806" y="101" width="6" height="6" fill="#a2a2a2"/><rect x="806" y="109" width="6" height="6" fill="#a2a2a2"/><rect x="806" y="117" width="6" height="6" fill="#a2a2a2"/><rect x="1308" y="62" width="64" height="64" fill="#000"/><rect x="1310" y="64" width="30" height="28" fill="url(#gOrangeSq)"/><rect x="1340" y="64" width="30" height="28" fill="#3366cc"/><rect x="1310" y="92" width="30" height="32" fill="#e42020"/><rect x="1340" y="92" width="30" height="32" fill="url(#gGreenSq)"/><circle cx="1416" cy="94" r="31.5" fill="url(#gGlobe)" stroke="#0a4a9a" stroke-width="1" stroke-dasharray="2 1.5" shape-rendering="auto"/><rect x="1406" y="67" width="24" height="3" fill="#ffffff"/><rect x="1422" y="75" width="18" height="3" fill="#ffffff"/><rect x="1388" y="82" width="20" height="3" fill="#ffffff"/><rect x="1410" y="82" width="24" height="3" fill="#ffffff"/><rect x="1436" y="82" width="8" height="3" fill="#ffffff"/><rect x="1386" y="90" width="44" height="3" fill="#ffffff"/><rect x="1432" y="90" width="14" height="3" fill="#ffffff"/><rect x="1390" y="98" width="26" height="3" fill="#ffffff"/><rect x="1388" y="105" width="14" height="3" fill="#ffffff"/><rect x="1404" y="105" width="12" height="3" fill="#ffffff"/><rect x="1394" y="112" width="22" height="3" fill="#ffffff"/><rect x="1402" y="119" width="14" height="3" fill="#ffffff"/><rect x="1398" y="62" width="8" height="34" fill="#ff8800"/><rect x="1386" y="74" width="32" height="6" fill="#ff8800"/><rect x="1416" y="94" width="32" height="32" fill="#ff8800"/><rect x="1418" y="97" width="28" height="4" fill="#f8a848"/><rect x="1419" y="104" width="26" height="19" fill="#f0f0f0"/><rect x="1421" y="107" width="12" height="2" fill="#000"/><rect x="1436" y="107" width="6" height="2" fill="#000"/><rect x="1421" y="113" width="4" height="2" fill="#000"/><rect x="1427" y="113" width="16" height="2" fill="#000"/><rect x="1421" y="119" width="12" height="2" fill="#000"/><rect x="1435" y="119" width="8" height="2" fill="#000"/><circle cx="1492" cy="94" r="31.5" fill="url(#gGlobe)" shape-rendering="auto"/><path d="M1480 80 H1518 V86 H1486 V125 H1480 Z" fill="#ffffff"/><path d="M1472 96 H1476 V118 H1472 Z" fill="#ffffff"/><path d="M1486 86 H1518 V90 H1490 V124 H1486 Z" fill="#0a4a98"/><rect x="1472" y="62" width="8" height="34" fill="#0a2e84"/><rect x="1460" y="74" width="32" height="6" fill="#0a2e84"/><rect x="1494" y="94" width="30" height="32" fill="#0a2e84"/><rect x="1496" y="104" width="26" height="20" fill="#80bcf4"/><rect x="1502" y="106" width="20" height="3" fill="#2a78d0"/><rect x="1502" y="109" width="2" height="15" fill="#2a78d0"/><rect x="1508" y="111" width="14" height="1" fill="#ffffff"/><rect x="1537.5" y="63.5" width="61" height="61" fill="#e4eefb" stroke="#000" stroke-width="3"/><rect x="1539" y="65" width="58" height="29" fill="url(#gTopBlue)"/><circle cx="1576" cy="102" r="19.5" fill="url(#gLime)" stroke="#6a9a10" stroke-width="1.5" shape-rendering="auto"/><rect x="1572" y="92" width="8" height="20" fill="#2a2a2a"/><rect x="1566" y="98" width="20" height="8" fill="#2a2a2a"/><rect x="1630" y="66" width="2" height="56" fill="#8c8c8c"/><rect x="1636" y="66" width="2" height="56" fill="#8c8c8c"/><rect x="1655.5" y="64.5" width="240" height="57" fill="#ffffff" stroke="#8a8a8a" stroke-width="3"/><circle cx="1677" cy="91" r="10" fill="none" stroke="#1a6de0" stroke-width="3.2" shape-rendering="auto"/><path d="M1684 98 L1693 107" stroke="#1a6de0" stroke-width="3.6" stroke-linecap="round" shape-rendering="auto"/></svg>
<div class="t" style="left:1701px;top:77.44px;font-size:27px;line-height:34px;color:#7f7f7f;font-weight:normal;">Search applications</div>
<div class="a" style="left:811px;top:-4px;width:517px;height:1321px;box-sizing:border-box;border-radius:13px;background:radial-gradient(ellipse 300px 250px at 480px 60px,rgba(128,100,110,0.35),rgba(128,100,110,0) 100%),linear-gradient(180deg,#6d6e74 0%,#727277 12%,#78777b 35%,#7a797c 60%,#7d7c7f 100%);border:1px solid rgba(10,10,10,0.85);box-shadow:inset 0 0 0 1px rgba(255,255,255,0.13),0 6px 22px rgba(0,0,0,0.28);"></div>
<div class="a" style="left:822px;top:294px;width:495px;height:44px;background:rgba(255,255,255,0.18);border-radius:8px;"></div>
<div class="t" style="left:841px;top:13.94px;font-size:27px;line-height:34px;color:#f3f3f3;font-weight:normal;-webkit-text-stroke:0.45px #f3f3f3;">Power Analysis</div>
<svg style="left:1285px;top:21px" width="12" height="20" viewBox="0 0 12 20"><path d="M2 2 L10 10 L2 18" fill="none" stroke="#f2f2f2" stroke-width="3" stroke-linecap="round" stroke-linejoin="round"/></svg>
<div class="a" style="left:840px;top:62px;width:460px;height:2px;background:rgba(255,255,255,0.2);"></div>
<div class="t" style="left:841px;top:79.94px;font-size:27px;line-height:34px;color:#f3f3f3;font-weight:normal;-webkit-text-stroke:0.45px #f3f3f3;">Meta Analysis</div>
<svg style="left:1285px;top:87px" width="12" height="20" viewBox="0 0 12 20"><path d="M2 2 L10 10 L2 18" fill="none" stroke="#f2f2f2" stroke-width="3" stroke-linecap="round" stroke-linejoin="round"/></svg>
<div class="t" style="left:841px;top:123.94px;font-size:27px;line-height:34px;color:#f3f3f3;font-weight:normal;-webkit-text-stroke:0.45px #f3f3f3;">Reports</div>
<svg style="left:1285px;top:131px" width="12" height="20" viewBox="0 0 12 20"><path d="M2 2 L10 10 L2 18" fill="none" stroke="#f2f2f2" stroke-width="3" stroke-linecap="round" stroke-linejoin="round"/></svg>
<div class="t" style="left:841px;top:167.94px;font-size:27px;line-height:34px;color:#f3f3f3;font-weight:normal;-webkit-text-stroke:0.45px #f3f3f3;">Descriptive Statistics</div>
<svg style="left:1285px;top:175px" width="12" height="20" viewBox="0 0 12 20"><path d="M2 2 L10 10 L2 18" fill="none" stroke="#f2f2f2" stroke-width="3" stroke-linecap="round" stroke-linejoin="round"/></svg>
<div class="t" style="left:841px;top:211.94px;font-size:27px;line-height:34px;color:#f3f3f3;font-weight:normal;-webkit-text-stroke:0.45px #f3f3f3;">Bayesian Statistics</div>
<svg style="left:1285px;top:219px" width="12" height="20" viewBox="0 0 12 20"><path d="M2 2 L10 10 L2 18" fill="none" stroke="#f2f2f2" stroke-width="3" stroke-linecap="round" stroke-linejoin="round"/></svg>
<div class="t" style="left:841px;top:255.94px;font-size:27px;line-height:34px;color:#f3f3f3;font-weight:normal;-webkit-text-stroke:0.45px #f3f3f3;">Tables</div>
<svg style="left:1285px;top:263px" width="12" height="20" viewBox="0 0 12 20"><path d="M2 2 L10 10 L2 18" fill="none" stroke="#f2f2f2" stroke-width="3" stroke-linecap="round" stroke-linejoin="round"/></svg>
<div class="t" style="left:841px;top:299.94px;font-size:27px;line-height:34px;color:#f3f3f3;font-weight:normal;-webkit-text-stroke:0.45px #f3f3f3;">Compare Means and Proportions</div>
<svg style="left:1285px;top:307px" width="12" height="20" viewBox="0 0 12 20"><path d="M2 2 L10 10 L2 18" fill="none" stroke="#f2f2f2" stroke-width="3" stroke-linecap="round" stroke-linejoin="round"/></svg>
<div class="t" style="left:841px;top:343.94px;font-size:27px;line-height:34px;color:#f3f3f3;font-weight:normal;-webkit-text-stroke:0.45px #f3f3f3;">General Linear Model</div>
<svg style="left:1285px;top:351px" width="12" height="20" viewBox="0 0 12 20"><path d="M2 2 L10 10 L2 18" fill="none" stroke="#f2f2f2" stroke-width="3" stroke-linecap="round" stroke-linejoin="round"/></svg>
<div class="t" style="left:841px;top:387.94px;font-size:27px;line-height:34px;color:#f3f3f3;font-weight:normal;-webkit-text-stroke:0.45px #f3f3f3;">Generalized Linear Models</div>
<svg style="left:1285px;top:395px" width="12" height="20" viewBox="0 0 12 20"><path d="M2 2 L10 10 L2 18" fill="none" stroke="#f2f2f2" stroke-width="3" stroke-linecap="round" stroke-linejoin="round"/></svg>
<div class="t" style="left:841px;top:431.94px;font-size:27px;line-height:34px;color:#f3f3f3;font-weight:normal;-webkit-text-stroke:0.45px #f3f3f3;">Mixed Models</div>
<svg style="left:1285px;top:439px" width="12" height="20" viewBox="0 0 12 20"><path d="M2 2 L10 10 L2 18" fill="none" stroke="#f2f2f2" stroke-width="3" stroke-linecap="round" stroke-linejoin="round"/></svg>
<div class="t" style="left:841px;top:475.94px;font-size:27px;line-height:34px;color:#f3f3f3;font-weight:normal;-webkit-text-stroke:0.45px #f3f3f3;">Correlate</div>
<svg style="left:1285px;top:483px" width="12" height="20" viewBox="0 0 12 20"><path d="M2 2 L10 10 L2 18" fill="none" stroke="#f2f2f2" stroke-width="3" stroke-linecap="round" stroke-linejoin="round"/></svg>
<div class="t" style="left:841px;top:519.94px;font-size:27px;line-height:34px;color:#f3f3f3;font-weight:normal;-webkit-text-stroke:0.45px #f3f3f3;">Regression</div>
<svg style="left:1285px;top:527px" width="12" height="20" viewBox="0 0 12 20"><path d="M2 2 L10 10 L2 18" fill="none" stroke="#f2f2f2" stroke-width="3" stroke-linecap="round" stroke-linejoin="round"/></svg>
<div class="t" style="left:841px;top:563.94px;font-size:27px;line-height:34px;color:#f3f3f3;font-weight:normal;-webkit-text-stroke:0.45px #f3f3f3;">Loglinear</div>
<svg style="left:1285px;top:571px" width="12" height="20" viewBox="0 0 12 20"><path d="M2 2 L10 10 L2 18" fill="none" stroke="#f2f2f2" stroke-width="3" stroke-linecap="round" stroke-linejoin="round"/></svg>
<div class="t" style="left:841px;top:607.94px;font-size:27px;line-height:34px;color:#f3f3f3;font-weight:normal;-webkit-text-stroke:0.45px #f3f3f3;">Neural Networks</div>
<svg style="left:1285px;top:615px" width="12" height="20" viewBox="0 0 12 20"><path d="M2 2 L10 10 L2 18" fill="none" stroke="#f2f2f2" stroke-width="3" stroke-linecap="round" stroke-linejoin="round"/></svg>
<div class="t" style="left:841px;top:651.94px;font-size:27px;line-height:34px;color:#f3f3f3;font-weight:normal;-webkit-text-stroke:0.45px #f3f3f3;">Classify</div>
<svg style="left:1285px;top:659px" width="12" height="20" viewBox="0 0 12 20"><path d="M2 2 L10 10 L2 18" fill="none" stroke="#f2f2f2" stroke-width="3" stroke-linecap="round" stroke-linejoin="round"/></svg>
<div class="t" style="left:841px;top:695.94px;font-size:27px;line-height:34px;color:#f3f3f3;font-weight:normal;-webkit-text-stroke:0.45px #f3f3f3;">Dimension Reduction</div>
<svg style="left:1285px;top:703px" width="12" height="20" viewBox="0 0 12 20"><path d="M2 2 L10 10 L2 18" fill="none" stroke="#f2f2f2" stroke-width="3" stroke-linecap="round" stroke-linejoin="round"/></svg>
<div class="t" style="left:841px;top:739.94px;font-size:27px;line-height:34px;color:#f3f3f3;font-weight:normal;-webkit-text-stroke:0.45px #f3f3f3;">Mapping</div>
<svg style="left:1285px;top:747px" width="12" height="20" viewBox="0 0 12 20"><path d="M2 2 L10 10 L2 18" fill="none" stroke="#f2f2f2" stroke-width="3" stroke-linecap="round" stroke-linejoin="round"/></svg>
<div class="t" style="left:841px;top:783.94px;font-size:27px;line-height:34px;color:#f3f3f3;font-weight:normal;-webkit-text-stroke:0.45px #f3f3f3;">Scale</div>
<svg style="left:1285px;top:791px" width="12" height="20" viewBox="0 0 12 20"><path d="M2 2 L10 10 L2 18" fill="none" stroke="#f2f2f2" stroke-width="3" stroke-linecap="round" stroke-linejoin="round"/></svg>
<div class="t" style="left:841px;top:827.94px;font-size:27px;line-height:34px;color:#f3f3f3;font-weight:normal;-webkit-text-stroke:0.45px #f3f3f3;">Nonparametric Tests</div>
<svg style="left:1285px;top:835px" width="12" height="20" viewBox="0 0 12 20"><path d="M2 2 L10 10 L2 18" fill="none" stroke="#f2f2f2" stroke-width="3" stroke-linecap="round" stroke-linejoin="round"/></svg>
<div class="t" style="left:841px;top:871.94px;font-size:27px;line-height:34px;color:#f3f3f3;font-weight:normal;-webkit-text-stroke:0.45px #f3f3f3;">Forecasting</div>
<svg style="left:1285px;top:879px" width="12" height="20" viewBox="0 0 12 20"><path d="M2 2 L10 10 L2 18" fill="none" stroke="#f2f2f2" stroke-width="3" stroke-linecap="round" stroke-linejoin="round"/></svg>
<div class="t" style="left:841px;top:915.94px;font-size:27px;line-height:34px;color:#f3f3f3;font-weight:normal;-webkit-text-stroke:0.45px #f3f3f3;">Survival</div>
<svg style="left:1285px;top:923px" width="12" height="20" viewBox="0 0 12 20"><path d="M2 2 L10 10 L2 18" fill="none" stroke="#f2f2f2" stroke-width="3" stroke-linecap="round" stroke-linejoin="round"/></svg>
<div class="t" style="left:841px;top:959.94px;font-size:27px;line-height:34px;color:#f3f3f3;font-weight:normal;-webkit-text-stroke:0.45px #f3f3f3;">Multiple Response</div>
<svg style="left:1285px;top:967px" width="12" height="20" viewBox="0 0 12 20"><path d="M2 2 L10 10 L2 18" fill="none" stroke="#f2f2f2" stroke-width="3" stroke-linecap="round" stroke-linejoin="round"/></svg>
<div class="t" style="left:885px;top:1003.94px;font-size:27px;line-height:34px;color:#f3f3f3;font-weight:normal;-webkit-text-stroke:0.45px #f3f3f3;">Missing Value Analysis...</div>
<svg style="left:840px;top:1006px" width="32" height="30" viewBox="0 0 32 30" shape-rendering="crispEdges"><rect x="0" y="0" width="32" height="30" fill="#1a48a8"/><rect x="2" y="2" width="28" height="12" fill="#90b2e0"/><rect x="2" y="14" width="28" height="14" fill="#4f9ad2"/><rect x="16" y="2" width="14" height="14" fill="#f2f4c0"/><rect x="14" y="2" width="2" height="26" fill="#b8ea60"/><rect x="2" y="16" width="28" height="2" fill="#b8ea60"/><path d="M2 10 L6 14 L10 10 L14 4" fill="none" stroke="#f04a30" stroke-width="3" shape-rendering="auto"/><path d="M2 22 L6 26 L10 22 L14 16" fill="none" stroke="#f04a30" stroke-width="3" shape-rendering="auto"/><path d="M16 22 L20 26 L24 22 L30 16" fill="none" stroke="#f04a30" stroke-width="3" shape-rendering="auto"/><path d="M19 5 Q22 2 25 5 Q26 8 23 10 L23 12" fill="none" stroke="#9a28b0" stroke-width="2" shape-rendering="auto"/><rect x="22" y="13" width="2" height="2" fill="#9a28b0"/></svg>
<div class="t" style="left:841px;top:1047.94px;font-size:27px;line-height:34px;color:#f3f3f3;font-weight:normal;-webkit-text-stroke:0.45px #f3f3f3;">Multiple Imputation</div>
<svg style="left:1285px;top:1055px" width="12" height="20" viewBox="0 0 12 20"><path d="M2 2 L10 10 L2 18" fill="none" stroke="#f2f2f2" stroke-width="3" stroke-linecap="round" stroke-linejoin="round"/></svg>
<div class="t" style="left:841px;top:1091.94px;font-size:27px;line-height:34px;color:#f3f3f3;font-weight:normal;-webkit-text-stroke:0.45px #f3f3f3;">Complex Samples</div>
<svg style="left:1285px;top:1099px" width="12" height="20" viewBox="0 0 12 20"><path d="M2 2 L10 10 L2 18" fill="none" stroke="#f2f2f2" stroke-width="3" stroke-linecap="round" stroke-linejoin="round"/></svg>
<div class="t" style="left:885px;top:1135.94px;font-size:27px;line-height:34px;color:#f3f3f3;font-weight:normal;-webkit-text-stroke:0.45px #f3f3f3;">Simulation...</div>
<svg style="left:840px;top:1137px" width="34" height="34" viewBox="0 0 34 34" shape-rendering="crispEdges"><rect x="0" y="0" width="26" height="26" fill="#1a7ad8"/><rect x="2" y="2" width="6" height="4" fill="#d4e6f6"/><rect x="2" y="8" width="6" height="4" fill="#d4e6f6"/><rect x="2" y="14" width="6" height="4" fill="#d4e6f6"/><rect x="2" y="20" width="6" height="4" fill="#d4e6f6"/><rect x="10" y="2" width="6" height="4" fill="#d4e6f6"/><rect x="10" y="8" width="6" height="4" fill="#d4e6f6"/><rect x="10" y="14" width="6" height="4" fill="#d4e6f6"/><rect x="10" y="20" width="6" height="4" fill="#d4e6f6"/><rect x="18" y="2" width="6" height="4" fill="#d4e6f6"/><rect x="18" y="8" width="6" height="4" fill="#d4e6f6"/><rect x="18" y="14" width="6" height="4" fill="#d4e6f6"/><rect x="18" y="20" width="6" height="4" fill="#d4e6f6"/><rect x="8" y="12" width="24" height="20" fill="#1a7ad8"/><rect x="10" y="14" width="20" height="16" fill="#e4eef8"/><rect x="18" y="16" width="2" height="14" fill="#1a7ad8"/><rect x="18" y="16" width="10" height="2" fill="#1a7ad8"/><rect x="12" y="18" width="6" height="2" fill="#1a7ad8"/><rect x="18" y="20" width="6" height="2" fill="#1a7ad8"/><rect x="14" y="22" width="4" height="2" fill="#1a7ad8"/><rect x="18" y="24" width="4" height="2" fill="#1a7ad8"/><rect x="16" y="26" width="2" height="2" fill="#1a7ad8"/></svg>
<div class="t" style="left:841px;top:1179.94px;font-size:27px;line-height:34px;color:#f3f3f3;font-weight:normal;-webkit-text-stroke:0.45px #f3f3f3;">Quality Control</div>
<svg style="left:1285px;top:1187px" width="12" height="20" viewBox="0 0 12 20"><path d="M2 2 L10 10 L2 18" fill="none" stroke="#f2f2f2" stroke-width="3" stroke-linecap="round" stroke-linejoin="round"/></svg>
<div class="t" style="left:841px;top:1223.94px;font-size:27px;line-height:34px;color:#f3f3f3;font-weight:normal;-webkit-text-stroke:0.45px #f3f3f3;">Spatial and Temporal Modeling...</div>
<svg style="left:1285px;top:1231px" width="12" height="20" viewBox="0 0 12 20"><path d="M2 2 L10 10 L2 18" fill="none" stroke="#f2f2f2" stroke-width="3" stroke-linecap="round" stroke-linejoin="round"/></svg>
<div class="t" style="left:841px;top:1267.94px;font-size:27px;line-height:34px;color:#f3f3f3;font-weight:normal;-webkit-text-stroke:0.45px #f3f3f3;">Direct Marketing</div>
<svg style="left:1285px;top:1275px" width="12" height="20" viewBox="0 0 12 20"><path d="M2 2 L10 10 L2 18" fill="none" stroke="#f2f2f2" stroke-width="3" stroke-linecap="round" stroke-linejoin="round"/></svg>
<div class="a" style="left:1317px;top:283px;width:541px;height:395px;box-sizing:border-box;border-radius:12px;background:#7a797c;border:1px solid rgba(10,10,10,0.85);box-shadow:inset 0 0 0 1px rgba(255,255,255,0.13),0 6px 22px rgba(0,0,0,0.28);"></div>
<div class="a" style="left:1328px;top:426px;width:520px;height:44px;background:#578ee6;border-radius:8px;"></div>
<div class="t" style="left:1390px;top:298.94px;font-size:27px;line-height:34px;color:#f3f3f3;font-weight:normal;-webkit-text-stroke:0.45px #f3f3f3;">Means...</div>
<svg style="left:1346px;top:300px" width="32" height="32" viewBox="0 0 32 32" shape-rendering="crispEdges"><rect x="0" y="0" width="32" height="32" fill="#3b77cc"/><rect x="2" y="2" width="28" height="12" fill="#90b2e0"/><rect x="2" y="2" width="28" height="3" fill="#b2cdee"/><rect x="2" y="14" width="28" height="14" fill="#4f9ad2"/><rect x="2" y="26" width="28" height="4" fill="#58b6e6"/><text x="16" y="24.5" text-anchor="middle" font-family="Liberation Sans" font-weight="bold" font-size="22" fill="#ffffff" shape-rendering="auto" transform="translate(16 0) scale(0.95 1.1) translate(-16 -2)">M</text></svg>
<div class="t" style="left:1390px;top:342.94px;font-size:27px;line-height:34px;color:#f3f3f3;font-weight:normal;-webkit-text-stroke:0.45px #f3f3f3;">One-Sample T Test...</div>
<svg style="left:1346px;top:344px" width="32" height="32" viewBox="0 0 32 32" shape-rendering="crispEdges"><rect x="0" y="0" width="32" height="32" fill="#1a48a8"/><rect x="2" y="2" width="28" height="12" fill="#90b2e0"/><rect x="2" y="2" width="28" height="3" fill="#b2cdee"/><rect x="2" y="14" width="28" height="14" fill="#4f9ad2"/><rect x="2" y="26" width="28" height="4" fill="#58b6e6"/><text x="18" y="28" text-anchor="middle" font-family="Liberation Serif" font-weight="bold" font-size="30" fill="#1a3050" opacity="0.6" shape-rendering="auto">t</text><text x="16" y="26" text-anchor="middle" font-family="Liberation Serif" font-weight="bold" font-size="30" fill="#fbfbf2" shape-rendering="auto">t</text></svg>
<div class="t" style="left:1390px;top:386.94px;font-size:27px;line-height:34px;color:#f3f3f3;font-weight:normal;-webkit-text-stroke:0.45px #f3f3f3;">Independent-Samples T Test...</div>
<svg style="left:1346px;top:388px" width="32" height="32" viewBox="0 0 32 32" shape-rendering="crispEdges"><rect x="0" y="0" width="32" height="32" fill="#3b77cc"/><rect x="2" y="2" width="28" height="12" fill="#90b2e0"/><rect x="2" y="2" width="28" height="3" fill="#b2cdee"/><rect x="2" y="14" width="28" height="14" fill="#4f9ad2"/><rect x="2" y="26" width="28" height="4" fill="#58b6e6"/><text x="16" y="16" text-anchor="middle" font-family="Liberation Serif" font-weight="bold" font-size="19" fill="#ffffff" opacity="1" shape-rendering="auto">t</text><rect x="6" y="18" width="2" height="2" fill="#f2f25a"/><rect x="4" y="20" width="2" height="2" fill="#f2f25a"/><rect x="8" y="20" width="2" height="2" fill="#f2f25a"/><rect x="4" y="22" width="2" height="2" fill="#f2f25a"/><rect x="6" y="22" width="2" height="2" fill="#f2f25a"/><rect x="8" y="22" width="2" height="2" fill="#f2f25a"/><rect x="4" y="24" width="2" height="2" fill="#f2f25a"/><rect x="8" y="24" width="2" height="2" fill="#f2f25a"/><rect x="4" y="26" width="2" height="2" fill="#f2f25a"/><rect x="8" y="26" width="2" height="2" fill="#f2f25a"/><rect x="10" y="24" width="2" height="2" fill="#f2f25a"/><rect x="12" y="24" width="2" height="2" fill="#f2f25a"/><rect x="18" y="18" width="2" height="2" fill="#f2f25a"/><rect x="20" y="18" width="2" height="2" fill="#f2f25a"/><rect x="18" y="20" width="2" height="2" fill="#f2f25a"/><rect x="22" y="20" width="2" height="2" fill="#f2f25a"/><rect x="18" y="22" width="2" height="2" fill="#f2f25a"/><rect x="20" y="22" width="2" height="2" fill="#f2f25a"/><rect x="18" y="24" width="2" height="2" fill="#f2f25a"/><rect x="22" y="24" width="2" height="2" fill="#f2f25a"/><rect x="18" y="26" width="2" height="2" fill="#f2f25a"/><rect x="20" y="26" width="2" height="2" fill="#f2f25a"/></svg>
<div class="t" style="left:1390px;top:430.94px;font-size:27px;line-height:34px;color:#f3f3f3;font-weight:normal;-webkit-text-stroke:0.45px #f3f3f3;">Paired-Samples T Test...</div>
<svg style="left:1346px;top:432px" width="32" height="32" viewBox="0 0 32 32" shape-rendering="crispEdges"><rect x="0" y="0" width="32" height="32" fill="#1a48a8"/><rect x="2" y="2" width="28" height="12" fill="#90b2e0"/><rect x="2" y="2" width="28" height="3" fill="#b2cdee"/><rect x="2" y="14" width="28" height="14" fill="#4f9ad2"/><rect x="2" y="26" width="28" height="4" fill="#58b6e6"/><text x="16" y="16" text-anchor="middle" font-family="Liberation Serif" font-weight="bold" font-size="19" fill="#ffffff" opacity="0.7" shape-rendering="auto">t</text><rect x="2" y="16" width="2" height="2" fill="#f2f25a"/><rect x="0" y="18" width="2" height="2" fill="#f2f25a"/><rect x="4" y="18" width="2" height="2" fill="#f2f25a"/><rect x="0" y="20" width="2" height="2" fill="#f2f25a"/><rect x="2" y="20" width="2" height="2" fill="#f2f25a"/><rect x="4" y="20" width="2" height="2" fill="#f2f25a"/><rect x="0" y="22" width="2" height="2" fill="#f2f25a"/><rect x="4" y="22" width="2" height="2" fill="#f2f25a"/><rect x="0" y="24" width="2" height="2" fill="#f2f25a"/><rect x="4" y="24" width="2" height="2" fill="#f2f25a"/><rect x="8" y="20" width="2" height="2" fill="#f2f25a"/><rect x="8" y="22" width="2" height="2" fill="#f2f25a"/><rect x="8" y="24" width="2" height="2" fill="#f2f25a"/><rect x="8" y="26" width="2" height="2" fill="#f2f25a"/><rect x="8" y="28" width="2" height="2" fill="#f2f25a"/><rect x="12" y="22" width="2" height="2" fill="#f2f25a"/><rect x="14" y="22" width="2" height="2" fill="#f2f25a"/><rect x="20" y="16" width="2" height="2" fill="#f2f25a"/><rect x="18" y="18" width="2" height="2" fill="#f2f25a"/><rect x="22" y="18" width="2" height="2" fill="#f2f25a"/><rect x="18" y="20" width="2" height="2" fill="#f2f25a"/><rect x="20" y="20" width="2" height="2" fill="#f2f25a"/><rect x="22" y="20" width="2" height="2" fill="#f2f25a"/><rect x="18" y="22" width="2" height="2" fill="#f2f25a"/><rect x="22" y="22" width="2" height="2" fill="#f2f25a"/><rect x="18" y="24" width="2" height="2" fill="#f2f25a"/><rect x="22" y="24" width="2" height="2" fill="#f2f25a"/><rect x="26" y="24" width="2" height="2" fill="#f2f25a"/><rect x="28" y="26" width="2" height="2" fill="#f2f25a"/><rect x="26" y="28" width="2" height="2" fill="#f2f25a"/><rect x="28" y="28" width="2" height="2" fill="#f2f25a"/></svg>
<div class="t" style="left:1390px;top:474.94px;font-size:27px;line-height:34px;color:#f3f3f3;font-weight:normal;-webkit-text-stroke:0.45px #f3f3f3;">One-Way ANOVA...</div>
<svg style="left:1346px;top:476px" width="32" height="32" viewBox="0 0 32 32" shape-rendering="crispEdges"><rect x="0" y="0" width="32" height="32" fill="#1a48a8"/><rect x="2" y="2" width="28" height="12" fill="#90b2e0"/><rect x="2" y="2" width="28" height="3" fill="#b2cdee"/><rect x="2" y="14" width="28" height="14" fill="#4f9ad2"/><rect x="2" y="26" width="28" height="4" fill="#58b6e6"/><path d="M10 4 H20 V8 H14 V11 H19 V15 H14 V21 H10 Z" fill="#ffffff"/><rect x="18" y="18" width="2" height="2" fill="#f2f25a"/><rect x="16" y="20" width="2" height="2" fill="#f2f25a"/><rect x="20" y="20" width="2" height="2" fill="#f2f25a"/><rect x="16" y="22" width="2" height="2" fill="#f2f25a"/><rect x="18" y="22" width="2" height="2" fill="#f2f25a"/><rect x="20" y="22" width="2" height="2" fill="#f2f25a"/><rect x="16" y="24" width="2" height="2" fill="#f2f25a"/><rect x="20" y="24" width="2" height="2" fill="#f2f25a"/><rect x="16" y="26" width="2" height="2" fill="#f2f25a"/><rect x="20" y="26" width="2" height="2" fill="#f2f25a"/></svg>
<div class="t" style="left:1390px;top:540.94px;font-size:27px;line-height:34px;color:#f3f3f3;font-weight:normal;-webkit-text-stroke:0.45px #f3f3f3;">One-Sample Proportions...</div>
<svg style="left:1346px;top:542px" width="32" height="32" viewBox="0 0 32 32" shape-rendering="crispEdges"><rect x="0" y="0" width="32" height="32" fill="#1a48a8"/><rect x="2" y="2" width="28" height="12" fill="#90b2e0"/><rect x="2" y="2" width="28" height="3" fill="#b2cdee"/><rect x="2" y="14" width="28" height="14" fill="#4f9ad2"/><rect x="2" y="26" width="28" height="4" fill="#58b6e6"/><path d="M10 6 H26 V8 L24 10 L22 12 L20 14 L18 16 L16 18 L14 20 L12 22 L11 24 H22 V20 H24 V26 H6 V24 L8 22 L10 20 L12 18 L14 16 L16 14 L18 12 L20 10 L21 8 H10 V12 H8 V8 H10 Z" fill="#ffffff"/></svg>
<div class="t" style="left:1390px;top:584.94px;font-size:27px;line-height:34px;color:#f3f3f3;font-weight:normal;-webkit-text-stroke:0.45px #f3f3f3;">Independent-Samples Proportions...</div>
<svg style="left:1346px;top:586px" width="32" height="32" viewBox="0 0 32 32" shape-rendering="crispEdges"><rect x="0" y="0" width="32" height="32" fill="#1a48a8"/><rect x="2" y="2" width="28" height="12" fill="#90b2e0"/><rect x="2" y="2" width="28" height="3" fill="#b2cdee"/><rect x="2" y="14" width="28" height="14" fill="#4f9ad2"/><rect x="2" y="26" width="28" height="4" fill="#58b6e6"/><path d="M11 4 H21 V6 L13 14 H21 V16 H11 V14 L19 6 H11 Z" fill="#ffffff"/><rect x="6" y="18" width="2" height="2" fill="#f2f25a"/><rect x="4" y="20" width="2" height="2" fill="#f2f25a"/><rect x="8" y="20" width="2" height="2" fill="#f2f25a"/><rect x="4" y="22" width="2" height="2" fill="#f2f25a"/><rect x="6" y="22" width="2" height="2" fill="#f2f25a"/><rect x="8" y="22" width="2" height="2" fill="#f2f25a"/><rect x="4" y="24" width="2" height="2" fill="#f2f25a"/><rect x="8" y="24" width="2" height="2" fill="#f2f25a"/><rect x="4" y="26" width="2" height="2" fill="#f2f25a"/><rect x="8" y="26" width="2" height="2" fill="#f2f25a"/><rect x="10" y="24" width="2" height="2" fill="#f2f25a"/><rect x="12" y="24" width="2" height="2" fill="#f2f25a"/><rect x="18" y="18" width="2" height="2" fill="#f2f25a"/><rect x="20" y="18" width="2" height="2" fill="#f2f25a"/><rect x="18" y="20" width="2" height="2" fill="#f2f25a"/><rect x="22" y="20" width="2" height="2" fill="#f2f25a"/><rect x="18" y="22" width="2" height="2" fill="#f2f25a"/><rect x="20" y="22" width="2" height="2" fill="#f2f25a"/><rect x="18" y="24" width="2" height="2" fill="#f2f25a"/><rect x="22" y="24" width="2" height="2" fill="#f2f25a"/><rect x="18" y="26" width="2" height="2" fill="#f2f25a"/><rect x="20" y="26" width="2" height="2" fill="#f2f25a"/></svg>
<div class="t" style="left:1390px;top:628.94px;font-size:27px;line-height:34px;color:#f3f3f3;font-weight:normal;-webkit-text-stroke:0.45px #f3f3f3;">Paired-Samples Proportions...</div>
<svg style="left:1346px;top:630px" width="32" height="32" viewBox="0 0 32 32" shape-rendering="crispEdges"><rect x="0" y="0" width="32" height="32" fill="#1a48a8"/><rect x="2" y="2" width="28" height="12" fill="#90b2e0"/><rect x="2" y="2" width="28" height="3" fill="#b2cdee"/><rect x="2" y="14" width="28" height="14" fill="#4f9ad2"/><rect x="2" y="26" width="28" height="4" fill="#58b6e6"/><path d="M11 4 H21 V6 L13 14 H21 V16 H11 V14 L19 6 H11 Z" fill="#ffffff"/><rect x="2" y="16" width="2" height="2" fill="#f2f25a"/><rect x="0" y="18" width="2" height="2" fill="#f2f25a"/><rect x="4" y="18" width="2" height="2" fill="#f2f25a"/><rect x="0" y="20" width="2" height="2" fill="#f2f25a"/><rect x="2" y="20" width="2" height="2" fill="#f2f25a"/><rect x="4" y="20" width="2" height="2" fill="#f2f25a"/><rect x="0" y="22" width="2" height="2" fill="#f2f25a"/><rect x="4" y="22" width="2" height="2" fill="#f2f25a"/><rect x="0" y="24" width="2" height="2" fill="#f2f25a"/><rect x="4" y="24" width="2" height="2" fill="#f2f25a"/><rect x="8" y="20" width="2" height="2" fill="#f2f25a"/><rect x="8" y="22" width="2" height="2" fill="#f2f25a"/><rect x="8" y="24" width="2" height="2" fill="#f2f25a"/><rect x="8" y="26" width="2" height="2" fill="#f2f25a"/><rect x="8" y="28" width="2" height="2" fill="#f2f25a"/><rect x="12" y="22" width="2" height="2" fill="#f2f25a"/><rect x="14" y="22" width="2" height="2" fill="#f2f25a"/><rect x="20" y="16" width="2" height="2" fill="#f2f25a"/><rect x="18" y="18" width="2" height="2" fill="#f2f25a"/><rect x="22" y="18" width="2" height="2" fill="#f2f25a"/><rect x="18" y="20" width="2" height="2" fill="#f2f25a"/><rect x="20" y="20" width="2" height="2" fill="#f2f25a"/><rect x="22" y="20" width="2" height="2" fill="#f2f25a"/><rect x="18" y="22" width="2" height="2" fill="#f2f25a"/><rect x="22" y="22" width="2" height="2" fill="#f2f25a"/><rect x="18" y="24" width="2" height="2" fill="#f2f25a"/><rect x="22" y="24" width="2" height="2" fill="#f2f25a"/><rect x="26" y="24" width="2" height="2" fill="#f2f25a"/><rect x="28" y="26" width="2" height="2" fill="#f2f25a"/><rect x="26" y="28" width="2" height="2" fill="#f2f25a"/><rect x="28" y="28" width="2" height="2" fill="#f2f25a"/></svg>
<div class="a" style="left:1346px;top:524px;width:484px;height:2px;background:rgba(255,255,255,0.17);"></div>
</body></html>
